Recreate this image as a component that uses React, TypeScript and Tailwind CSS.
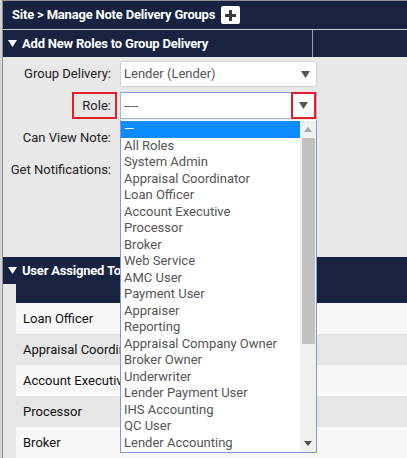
import React from 'react';

const roles = [
  '—',
  'All Roles',
  'System Admin',
  'Appraisal Coordinator',
  'Loan Officer',
  'Account Executive',
  'Processor',
  'Broker',
  'Web Service',
  'AMC User',
  'Payment User',
  'Appraiser',
  'Reporting',
  'Appraisal Company Owner',
  'Broker Owner',
  'Underwriter',
  'Lender Payment User',
  'IHS Accounting',
  'QC User',
  'Lender Accounting',
];

const assigned = ['Loan Officer', 'Appraisal Coordinator', 'Account Executive', 'Processor', 'Broker'];

function Caret() {
  return (
    <svg width="9" height="7" viewBox="0 0 9 7" className="shrink-0">
      <path d="M0 0h9L4.5 7z" fill="#555" />
    </svg>
  );
}

export default function App() {
  return (
    <div className="relative h-[458px] w-[407px] overflow-hidden bg-[#e8e8e8] text-[13px] font-['Roboto',sans-serif]">
      <div className="h-full border-l-2 border-[#d4d4d4]">
        <div className="h-full border-l border-t border-[#8e8e8e]">
          <div className="flex h-[28px] items-center gap-[6px] bg-[#172341] pl-[9px]">
            <span className="text-[13px] font-bold tracking-[-0.2px] text-white">Site &gt; Manage Note Delivery Groups</span>
            <span className="flex h-[18px] w-[19px] items-center justify-center rounded-[2px] bg-white">
              <svg width="11" height="11" viewBox="0 0 11 11">
                <path d="M4 0h3v4h4v3H7v4H4V7H0V4h4z" fill="#3a3a3a" />
              </svg>
            </span>
          </div>
          <div className="flex h-[28px] border-t border-[#c9ccd3] bg-[#172341]">
            <div className="flex w-[310px] items-center gap-[5px] border-r border-[#9aa0ad] pl-[5px]">
              <svg width="9" height="7" viewBox="0 0 9 7">
                <path d="M0 0h9L4.5 7z" fill="#fff" />
              </svg>
              <span className="text-[13px] font-bold tracking-[-0.2px] text-white">Add New Roles to Group Delivery</span>
            </div>
          </div>

          <div className="grid h-[200px] grid-cols-[108px_197px] content-start gap-x-[9px] pt-[4px] text-[#222]">
            <div className="flex h-[26px] items-center justify-end">Group Delivery:</div>
            <div className="flex h-[26px] items-center justify-between rounded-[3px] border border-[#d2d2d2] bg-white pl-[3px] pr-[6px] text-[#555]">
              <span>Lender (Lender)</span>
              <Caret />
            </div>

            <div className="mt-[5px] flex h-[27px] items-center justify-end">
              <span className="-mr-[6px] flex h-[27px] items-center border-2 border-[#e51f2a] pl-[8px] pr-[4px]">Role:</span>
            </div>
            <div className="mt-[5px] flex h-[27px] items-center justify-between border border-[#9fb6d9] border-t-[#7ea2d6] bg-white pl-[3px] text-[#555]">
              <span>----</span>
              <span className="flex h-[27px] w-[25px] items-center justify-center border-2 border-[#e51f2a]">
                <Caret />
              </span>
            </div>

            <div className="flex h-[37px] items-center justify-end pt-[1px]">Can View Note:</div>
            <div className="h-[37px]" />
            <div className="flex h-[26px] items-center justify-end pt-[1px]">Get Notifications:</div>
            <div className="h-[26px]" />
          </div>

          <div className="flex h-[27px] items-center gap-[5px] bg-[#172341] pl-[5px]">
            <svg width="9" height="7" viewBox="0 0 9 7">
              <path d="M0 0h9L4.5 7z" fill="#fff" />
            </svg>
            <span className="text-[13px] font-bold tracking-[-0.2px] text-white">User Assigned To Group Delivery</span>
          </div>
          <div className="ml-[13px]">
            <div className="h-[19px] bg-[#172341]" />
            {assigned.map((name, i) => (
              <div
                key={name}
                className={`flex h-[31px] items-center pl-[7px] text-[#111] ${i % 2 === 0 ? 'bg-[#f8f8f8]' : 'bg-[#e6e6e6]'}`}
              >
                {name}
              </div>
            ))}
          </div>
        </div>
      </div>

      {/* open role list */}
      <div className="absolute left-[120px] top-[120px] flex h-[333px] w-[197px] border border-t-0 border-[#7d9bd0] bg-white pt-[1px]">
        <ul className="flex-1 text-[13px] leading-[16.5px] text-[#555]">
          {roles.map((r, i) => (
            <li key={r} className={`h-[16.5px] pl-[3px] ${i === 0 ? 'bg-[#0a8bff] text-white' : ''}`}>
              {r}
            </li>
          ))}
        </ul>
        <div className="flex w-[16px] flex-col bg-[#f0f0f0]">
          <div className="flex h-[17px] items-center justify-center">
            <svg width="8" height="5" viewBox="0 0 8 5">
              <path d="M0 5h8L4 0z" fill="#a3a3a3" />
            </svg>
          </div>
          <div className="mx-auto h-[206px] w-[13px] bg-[#c1c1c1]" />
          <div className="flex-1" />
          <div className="flex h-[17px] items-center justify-center">
            <svg width="8" height="5" viewBox="0 0 8 5">
              <path d="M0 0h8L4 5z" fill="#505050" />
            </svg>
          </div>
        </div>
      </div>
    </div>
  );
}
